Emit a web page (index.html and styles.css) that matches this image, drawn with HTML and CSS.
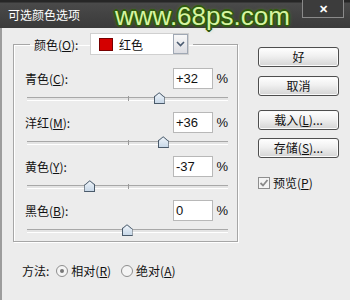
FILE: index.html
```html
<!DOCTYPE html>
<html lang="zh-CN">
<head>
    <meta charset="UTF-8">
    <title>可选颜色选项</title>
    <link rel="stylesheet" href="styles.css">
</head>
<body>
    <div class="dialog">
        <!-- Title bar -->
        <div class="titlebar">
            <span class="title">可选颜色选项</span>
            <span class="watermark">www.68ps.com</span>
            <span class="close">✕</span>
        </div>

        <div class="content">
            <div class="left">
                <fieldset class="group">
                    <legend class="colors">
                        <span class="color-label">颜色(<u>O</u>):</span>
                        <span class="dropdown">
                            <span class="swatch"></span>
                            <span class="dropdown-text">红色</span>
                            <span class="arrow">
                                <svg width="9" height="6" viewBox="0 0 9 6"><path d="M1 1 L4.5 4.5 L8 1" fill="none" stroke="#4a5a70" stroke-width="1.6"/></svg>
                            </span>
                        </span>
                    </legend>

                    <div class="channel">
                        <div class="channel-row">
                            <span class="channel-label">青色(<u>C</u>):</span>
                            <span class="num">+32</span>
                            <span class="pct">%</span>
                        </div>
                        <div class="slider">
                            <span class="tick"></span>
                            <span class="thumb" style="left: 66%"></span>
                        </div>
                    </div>

                    <div class="channel">
                        <div class="channel-row">
                            <span class="channel-label">洋红(<u>M</u>):</span>
                            <span class="num">+36</span>
                            <span class="pct">%</span>
                        </div>
                        <div class="slider">
                            <span class="tick"></span>
                            <span class="thumb" style="left: 68%"></span>
                        </div>
                    </div>

                    <div class="channel">
                        <div class="channel-row">
                            <span class="channel-label">黄色(<u>Y</u>):</span>
                            <span class="num">-37</span>
                            <span class="pct">%</span>
                        </div>
                        <div class="slider">
                            <span class="tick"></span>
                            <span class="thumb" style="left: 31.5%"></span>
                        </div>
                    </div>

                    <div class="channel">
                        <div class="channel-row">
                            <span class="channel-label">黑色(<u>B</u>):</span>
                            <span class="num">0</span>
                            <span class="pct">%</span>
                        </div>
                        <div class="slider">
                            <span class="tick"></span>
                            <span class="thumb" style="left: 50%"></span>
                        </div>
                    </div>
                </fieldset>

                <!-- Method -->
                <div class="method">
                    <span class="method-label">方法:</span>
                    <span class="radio checked"></span>
                    <span class="radio-text">相对(<u>R</u>)</span>
                    <span class="radio"></span>
                    <span class="radio-text">绝对(<u>A</u>)</span>
                </div>
            </div>

            <!-- Buttons -->
            <div class="right">
                <div class="btn btn-ok">好</div>
                <div class="btn btn-cancel">取消</div>
                <div class="btn btn-load">载入(<u>L</u>)...</div>
                <div class="btn btn-save">存储(<u>S</u>)...</div>
                <div class="preview">
                    <span class="checkbox">
                        <svg width="10" height="10" viewBox="0 0 10 10"><path d="M1.5 5 L4 7.5 L8.5 2" fill="none" stroke="#8a8a8a" stroke-width="1.8"/></svg>
                    </span>
                    <span>预览(<u>P</u>)</span>
                </div>
            </div>
        </div>
    </div>
</body>
</html>
```

FILE: styles.css
```css
/* General */
body {
    margin: 0;
    padding: 0;
    font-family: 'Noto Sans CJK SC', 'Liberation Sans', sans-serif;
    font-size: 12px;
    color: #111;
}
u {
    text-decoration: underline;
    text-underline-offset: 1px;
}
.dialog {
    width: 350px;
    height: 300px;
    background: #ececec;
    overflow: hidden;
}

/* Title bar */
.titlebar {
    position: relative;
    height: 28px;
    background: linear-gradient(#262626 0, #262626 2px, #4a4a4a 3px, #3a3a3a 100%);
    color: #fff;
    display: flex;
    align-items: center;
}
.title {
    margin-left: 8px;
    font-size: 12px;
}
.watermark {
    position: absolute;
    left: 115px;
    top: 1px;
    z-index: 2;
    font-family: 'Liberation Sans', sans-serif;
    font-size: 26px;
    color: #d6f5a0;
    text-shadow:
        1px 1px 0 #2f5a0e, -1px -1px 0 #2f5a0e,
        1px -1px 0 #2f5a0e, -1px 1px 0 #2f5a0e,
        2px 0 0 #2f5a0e, -2px 0 0 #2f5a0e,
        0 2px 0 #2f5a0e, 0 -2px 0 #2f5a0e,
        0 0 4px #6a9a20;
}
.close {
    position: absolute;
    left: 302px;
    top: 0;
    width: 40px;
    height: 17px;
    border: 1px solid #8a8a8a;
    border-top: none;
    background: #3c3c3c;
    font-size: 11px;
    font-weight: bold;
    text-align: center;
    line-height: 17px;
}

/* Content */
.content {
    display: flex;
    height: 272px;
    border-left: 2px solid #9c9c9c;
    padding: 5px 0 0 11px;
    box-sizing: border-box;
}
.left {
    width: 225px;
}

/* Group box */
.group {
    margin: 0;
    padding: 0 9px 0 11px;
    width: 225px;
    height: 209px;
    box-sizing: border-box;
    border: 1px solid #a6a6a6;
    box-shadow: inset 1px 1px 0 #fff, 1px 1px 0 #fff;
}
.colors {
    display: flex;
    align-items: center;
    margin-left: 5px;
    padding: 0 4px;
    height: 22px;
}
.color-label {
    width: 56px;
}
.dropdown {
    display: flex;
    align-items: center;
    width: 99px;
    height: 22px;
    box-sizing: border-box;
    background: #fff;
    border: 1px solid #d0d0d0;
}
.swatch {
    width: 14px;
    height: 13px;
    margin-left: 8px;
    box-sizing: border-box;
    background: #d40000;
    border: 1px solid #700;
}
.dropdown-text {
    flex: 1;
    margin-left: 6px;
}
.arrow {
    width: 15px;
    height: 20px;
    box-sizing: border-box;
    border: 1px solid #a0a8b4;
    background: linear-gradient(#f8f8f8, #dcdde2);
    display: flex;
    align-items: center;
    justify-content: center;
}

/* Channels */
.channel {
    display: flex;
    flex-direction: column;
    gap: 5px;
    margin-bottom: 8px;
}
.channel:first-of-type {
    margin-top: 13px;
}
.channel-row {
    display: flex;
    align-items: center;
    height: 21px;
}
.channel-label {
    flex: 1;
}
.num {
    width: 40px;
    height: 21px;
    box-sizing: border-box;
    background: #fff;
    border: 1px solid #b8b8b8;
    padding-left: 2px;
    font-family: 'Liberation Sans', sans-serif;
    font-size: 13px;
    line-height: 19px;
}
.pct {
    width: 15px;
    text-align: right;
    font-family: 'Liberation Sans', sans-serif;
    font-size: 13px;
}
.slider {
    position: relative;
    height: 10px;
    margin-left: 2px;
}
.slider::before {
    content: "";
    position: absolute;
    left: 0;
    right: 0;
    top: 3px;
    height: 2px;
    border-top: 1px solid #a8a8a8;
    border-bottom: 1px solid #fff;
    background: #e4e4e4;
}
.tick {
    position: absolute;
    left: 50%;
    top: 2px;
    width: 1px;
    height: 5px;
    background: #9a9a9a;
}
.thumb {
    position: absolute;
    top: -2px;
    width: 11px;
    height: 12px;
    margin-left: -6px;
    box-sizing: border-box;
    background: linear-gradient(#f4f8fc, #c8d8e8);
    border: 1px solid #4a5a6a;
    border-top: none;
    clip-path: polygon(50% 0, 100% 40%, 100% 100%, 0 100%, 0 40%);
}
.thumb::before {
    content: "";
    position: absolute;
    inset: 0 -1px;
    background: #4a5a6a;
    clip-path: polygon(50% 0, 100% 40%, 90% 45%, 50% 12%, 10% 45%, 0 40%);
}

/* Method */
.method {
    display: flex;
    align-items: center;
    margin: 20px 0 0 9px;
}
.method-label {
    margin-right: 7px;
}
.radio {
    width: 12px;
    height: 12px;
    box-sizing: border-box;
    border: 1px solid #8e8e8e;
    border-radius: 50%;
    background: #f4f4f4;
    position: relative;
    margin-right: 3px;
}
.radio.checked::after {
    content: "";
    position: absolute;
    left: 3px;
    top: 3px;
    width: 4px;
    height: 4px;
    border-radius: 50%;
    background: #777;
}
.radio-text {
    margin-right: 10px;
}

/* Buttons */
.right {
    display: flex;
    flex-direction: column;
    margin: 14px 0 0 20px;
    width: 81px;
}
.btn {
    height: 20px;
    box-sizing: border-box;
    border: 1px solid #4e4e4e;
    border-radius: 3px;
    background: linear-gradient(#ffffff, #f0f0f0 45%, #d4d4d4);
    box-shadow: inset 0 0 0 1px #fafafa;
    text-align: center;
    line-height: 18px;
}
.btn-cancel {
    margin-top: 9px;
}
.btn-load {
    margin-top: 14px;
}
.btn-save {
    margin-top: 8px;
}
.preview {
    display: flex;
    align-items: center;
    margin-top: 16px;
}
.checkbox {
    width: 12px;
    height: 12px;
    box-sizing: border-box;
    border: 1px solid #8e8e8e;
    background: #f4f4f4;
    display: flex;
    align-items: center;
    justify-content: center;
    margin-right: 3px;
}
```
